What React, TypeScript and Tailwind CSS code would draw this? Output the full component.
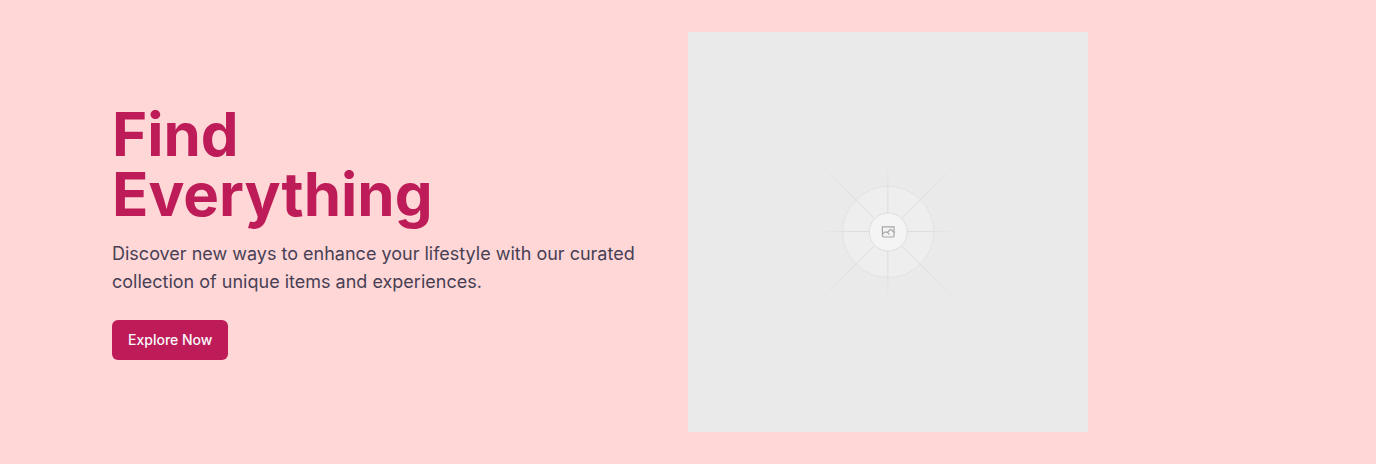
const FADES = [
  { id: "fade-rising", x1: 404, y1: 796, x2: 796, y2: 404 },
  { id: "fade-across", x1: 404, y1: 598, x2: 796, y2: 598 },
  { id: "fade-down", x1: 599, y1: 404, x2: 599, y2: 796 },
  { id: "fade-falling", x1: 404, y1: 405, x2: 796, y2: 797 },
];

function Placeholder() {
  return (
    <svg
      role="img"
      aria-label="Hero"
      viewBox="0 0 1200 1200"
      fill="none"
      className="aspect-square w-full max-w-[400px]"
    >
      <defs>
        {FADES.map((fade) => (
          <linearGradient key={fade.id} {...fade} gradientUnits="userSpaceOnUse">
            <stop stopColor="#c9c9c9" stopOpacity="0" />
            <stop offset=".208" stopColor="#c9c9c9" />
            <stop offset=".792" stopColor="#c9c9c9" />
            <stop offset="1" stopColor="#c9c9c9" stopOpacity="0" />
          </linearGradient>
        ))}
      </defs>
      <rect width="1200" height="1200" rx="3" fill="#eaeaea" />
      <g opacity=".5">
        <circle cx="600.709" cy="599.88" r="136.62" fill="#fafafa" stroke="#c9c9c9" strokeWidth="2.418" opacity=".5" />
        <g strokeWidth="2.418">
          <path stroke="url(#fade-rising)" d="M404.8 795.7 796.2 404.3" />
          <path stroke="url(#fade-across)" d="M404.846 598.671h391.726" />
          <path stroke="url(#fade-down)" d="M599.5 795.742V404.017" />
          <path stroke="url(#fade-falling)" d="m795.717 796.597-391.441-391.44" />
        </g>
        <circle cx="600.709" cy="599.88" r="56.824" fill="#fff" stroke="#c9c9c9" strokeWidth="2.418" />
        <path
          fill="#666"
          fillRule="evenodd"
          clipRule="evenodd"
          d="M616.426 586.58h-31.434v16.176l3.553-3.554.531-.531h9.068l.074-.074 8.463-8.463h2.565l7.18 7.181V586.58Zm-15.715 14.654 3.698 3.699 1.283 1.282-2.565 2.565-1.282-1.283-5.2-5.199h-6.066l-5.514 5.514-.073.073v2.876a2.418 2.418 0 0 0 2.418 2.418h26.598a2.418 2.418 0 0 0 2.418-2.418v-8.317l-8.463-8.463-7.181 7.181-.071.072Zm-19.347 5.442v4.085a6.045 6.045 0 0 0 6.046 6.045h26.598a6.044 6.044 0 0 0 6.045-6.045v-7.108l1.356-1.355-1.282-1.283-.074-.073v-17.989h-38.689v23.43l-.146.146.146.147Z"
        />
      </g>
    </svg>
  );
}

export default function App() {
  return (
    <section className="flex min-h-screen items-center bg-[#ffd7d7] font-['Inter',sans-serif]">
      <div className="mx-auto grid w-full max-w-6xl grid-cols-2 items-center">
        <div>
          <h1 className="text-6xl font-bold leading-none text-[#be1c58]">
            Find
            <br />
            Everything
          </h1>
          <p className="mt-4 max-w-xl pr-6 text-lg leading-7 text-[#483f54]">
            Discover new ways to enhance your lifestyle with our curated collection of unique items and experiences.
          </p>
          <button type="button" className="mt-6 h-10 rounded-md bg-[#be1c58] px-4 text-sm font-medium text-[#f8fafc]">
            Explore Now
          </button>
        </div>
        <Placeholder />
      </div>
    </section>
  );
}
